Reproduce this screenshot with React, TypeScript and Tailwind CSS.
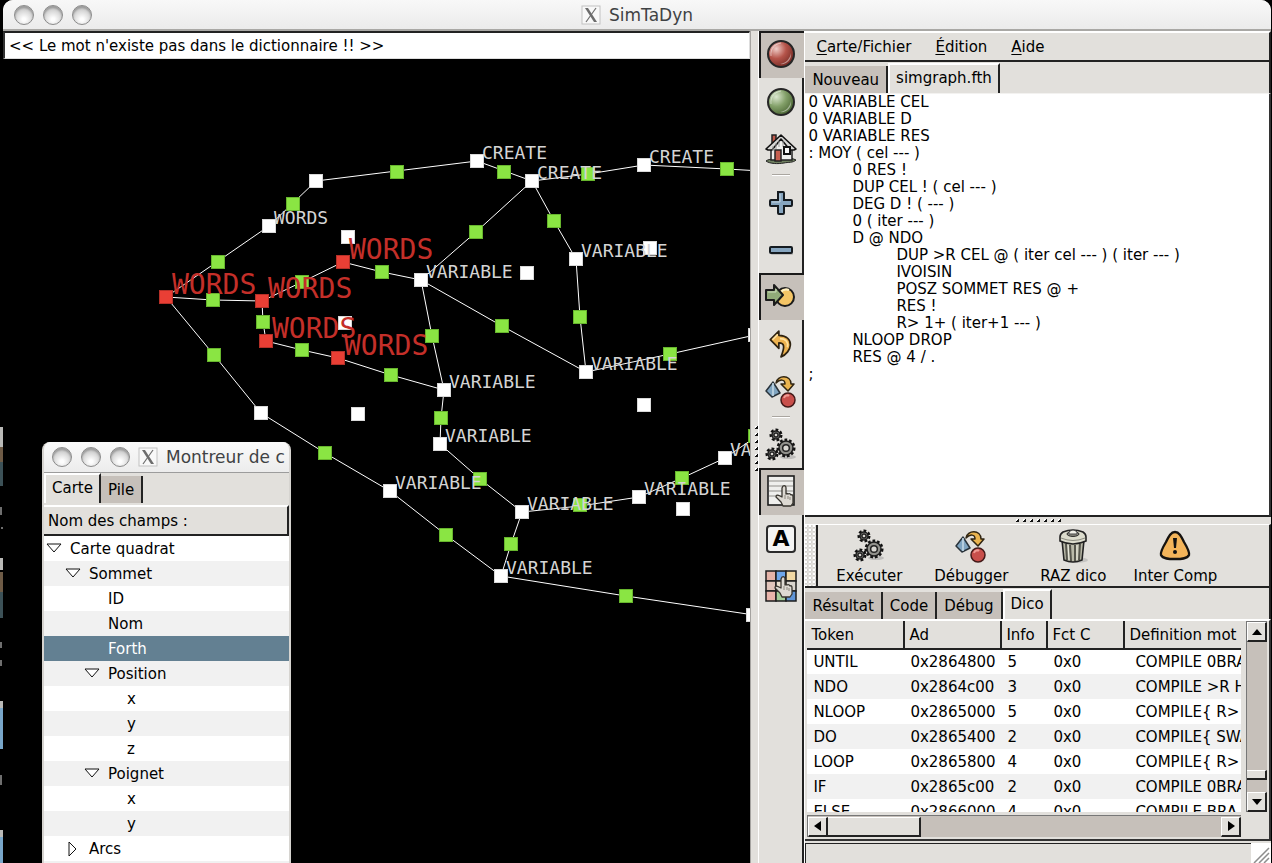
import { useState } from "react";
import type { ReactNode } from "react";

type Point = [number, number];

const EDGES: Point[][] = [
  [[166, 297], [269, 226], [316, 181], [477, 161], [532, 181], [588, 174], [644, 165], [727, 169], [811, 174]],
  [[532, 181], [476, 232], [421, 280]],
  [[532, 181], [554, 221], [576, 259], [580, 317], [586, 372]],
  [[421, 280], [502, 326], [586, 372], [670, 354], [755, 335]],
  [[166, 297], [213, 300], [262, 301], [302, 282], [343, 262], [382, 272], [421, 280]],
  [[262, 301], [263, 322], [266, 341], [302, 350], [338, 358], [391, 375], [444, 390]],
  [[421, 280], [432, 336], [444, 390], [441, 418], [440, 444], [480, 479], [522, 512], [511, 544], [501, 576]],
  [[522, 512], [580, 506], [639, 497], [682, 478], [725, 458], [757, 436]],
  [[166, 297], [214, 355], [261, 413], [325, 453], [390, 491], [446, 535], [501, 576], [626, 596], [754, 615]],
];

const WHITE: Point[] = [
  [316, 181], [269, 226], [477, 161], [532, 181], [644, 165], [576, 259], [421, 280], [586, 372],
  [444, 390], [440, 444], [522, 512], [390, 491], [501, 576], [261, 413], [639, 497], [725, 458],
  [755, 335], [753, 615], [348, 237], [527, 273], [345, 323], [650, 248], [644, 405], [358, 414], [683, 509],
];

const GREEN: Point[] = [
  [397, 172], [293, 204], [218, 262], [504, 172], [588, 174], [727, 169], [476, 232], [554, 221],
  [580, 317], [502, 326], [670, 354], [382, 272], [302, 282], [213, 300], [263, 322], [302, 350],
  [391, 375], [432, 336], [441, 418], [480, 479], [214, 355], [325, 453], [446, 535], [511, 544],
  [580, 505], [682, 478], [755, 436], [626, 596],
];

const RED: Point[] = [[166, 297], [262, 301], [343, 262], [266, 341], [338, 358]];

const LABELS: [number, number, string][] = [
  [269, 226, "WORDS"], [477, 161, "CREATE"], [532, 181, "CREATE"], [644, 165, "CREATE"],
  [576, 259, "VARIABLE"], [421, 280, "VARIABLE"], [586, 372, "VARIABLE"], [444, 390, "VARIABLE"],
  [440, 444, "VARIABLE"], [522, 512, "VARIABLE"], [390, 491, "VARIABLE"], [501, 576, "VARIABLE"],
  [639, 497, "VARIABLE"], [725, 458, "VARIABLE"],
];

const PROGRAM = `0 VARIABLE CEL
0 VARIABLE D
0 VARIABLE RES
: MOY ( cel --- )
\t0 RES !
\tDUP CEL ! ( cel --- )
\tDEG D ! ( --- )
\t0 ( iter --- )
\tD @ NDO
\t\tDUP >R CEL @ ( iter cel --- ) ( iter --- )
\t\tIVOISIN
\t\tPOSZ SOMMET RES @ +
\t\tRES !
\t\tR> 1+ ( iter+1 --- )
\tNLOOP DROP
\tRES @ 4 / .
;`;

const WORDS = [
  ["UNTIL", "0x2864800", "5", "0x0", "COMPILE 0BRANCH"],
  ["NDO", "0x2864c00", "3", "0x0", "COMPILE >R HERE"],
  ["NLOOP", "0x2865000", "5", "0x0", "COMPILE{ R>"],
  ["DO", "0x2865400", "2", "0x0", "COMPILE{ SWAP"],
  ["LOOP", "0x2865800", "4", "0x0", "COMPILE{ R>"],
  ["IF", "0x2865c00", "2", "0x0", "COMPILE 0BRANCH"],
  ["ELSE", "0x2866000", "4", "0x0", "COMPILE BRA"],
];

/* ---------- icons ---------- */

function Ball({ id, light, mid, dark }: { id: string; light: string; mid: string; dark: string }) {
  return (
    <svg width="30" height="30" viewBox="0 0 30 30" aria-hidden="true">
      <defs>
        <radialGradient id={id} cx="0.32" cy="0.3" r="0.75">
          <stop offset="0" stopColor={light} />
          <stop offset="0.5" stopColor={mid} />
          <stop offset="1" stopColor={dark} />
        </radialGradient>
      </defs>
      <circle cx="15" cy="15" r="13" fill={`url(#${id})`} stroke="#262626" strokeWidth="2" />
      <path d="M25 14c-1 6-5 10-11 11 6 1 12-4 11-11z" fill="#fff" opacity="0.45" />
      <path d="M5 17C4 9 9 5 15 4" fill="none" stroke="#fff" strokeWidth="1" opacity="0.5" />
    </svg>
  );
}

function House() {
  return (
    <svg width="32" height="32" viewBox="0 0 32 32" aria-hidden="true">
      <path d="M1 28c4-3 9-1 13-2 5-1 11-2 17 1-3 3-8 2-12 3-6 1-14 1-18-2z" fill="#6f8060" stroke="#222" />
      <path d="M7 2h4v9H7z" fill="#c0594a" stroke="#222" strokeWidth="1.5" />
      <path d="M6 15L16 4l11 11v12H6z" fill="#efefed" stroke="#222" strokeWidth="1.5" />
      <path d="M16 2L1 16l2 1h4L16 6l9 11h4l2-1z" fill="#d9d9d7" stroke="#111" strokeWidth="1.6" strokeLinejoin="round" />
      <path d="M8 13v5M11 10v6M14 8v6M18 8v6" stroke="#999" strokeWidth="1" />
      <path d="M10 17h6v11h-6z" fill="#c65f50" stroke="#222" strokeWidth="1.5" />
      <path d="M19 14h6v7h-6z" fill="#f8f8f8" stroke="#111" strokeWidth="2" />
    </svg>
  );
}

function Plus() {
  return (
    <svg width="26" height="26" viewBox="0 0 26 26" aria-hidden="true">
      <path d="M11 3h5v8h8v5h-8v8h-5v-8H3v-5h8z" fill="#888" opacity="0.4" />
      <path d="M10 2h5q1 0 1 1v7h7q1 0 1 1v4q0 1-1 1h-7v7q0 1-1 1h-4q-1 0-1-1v-7H3q-1 0-1-1v-4q0-1 1-1h7z" fill="#86a5bf" stroke="#151b20" strokeWidth="2" />
      <path d="M12 4v8H4" fill="none" stroke="#c5d6e2" strokeWidth="1" />
    </svg>
  );
}

function Minus() {
  return (
    <svg width="26" height="26" viewBox="0 0 26 26" aria-hidden="true">
      <rect x="3" y="12" width="22" height="6" rx="1" fill="#888" opacity="0.4" />
      <rect x="2" y="10" width="22" height="6" rx="1" fill="#86a5bf" stroke="#151b20" strokeWidth="2" />
    </svg>
  );
}

function Goto() {
  return (
    <svg width="32" height="26" viewBox="0 0 32 26" aria-hidden="true">
      <circle cx="20" cy="14" r="9" fill="#f4c566" stroke="#1b1b1b" strokeWidth="2" />
      <path d="M16 9a7 7 0 0 1 8-2" stroke="#fff0c0" strokeWidth="2" fill="none" />
      <path d="M1 7h8V2l9 10-9 10v-5H1z" fill="#91ab79" stroke="#1b1b1b" strokeWidth="2" strokeLinejoin="round" />
      <path d="M3 9h8V6" stroke="#cdddbd" strokeWidth="1" fill="none" />
    </svg>
  );
}

function Undo() {
  return (
    <svg width="28" height="30" viewBox="0 0 26 28" aria-hidden="true">
      <path d="M11 2L3 10l8 8v-5c5 0 6 3 2 13 10-4 14-19-2-20z" fill="#eeb350" stroke="#2e2210" strokeWidth="1.6" strokeLinejoin="round" />
      <path d="M10 5l-5 5M12 9c6 0 8 4 7 8" stroke="#ffe2a0" strokeWidth="1.5" fill="none" />
    </svg>
  );
}

function Debug() {
  return (
    <svg width="34" height="34" viewBox="0 0 34 34" aria-hidden="true">
      <path d="M9 8l7 11-8 4-6-6z" fill="#7fa4c0" stroke="#29333b" strokeWidth="1.5" strokeLinejoin="round" />
      <path d="M9 9v13" stroke="#c6dbe8" strokeWidth="1.5" />
      <path d="M12 9c1-8 15-9 15 1h3l-6 7-7-7h4c0-5-5-5-9-1z" fill="#eab44f" stroke="#302512" strokeWidth="1.5" strokeLinejoin="round" />
      <circle cx="24" cy="26" r="7" fill="#c84f4b" stroke="#431918" strokeWidth="1.5" />
      <path d="M20 24c1-3 4-3 5-2" stroke="#ef9b93" strokeWidth="2" fill="none" />
    </svg>
  );
}

function Cog({ x, y, r, w }: { x: number; y: number; r: number; w: number }) {
  return (
    <g transform={`translate(${x} ${y})`}>
      <circle r={r} fill="none" stroke="#111" strokeWidth={w + 2} strokeDasharray="2.6 1.9" />
      <circle r={r - 1} fill="#91918c" stroke="#1c1c1c" strokeWidth="1.5" />
      <circle r={r / 2.4} fill="#d8d6d1" stroke="#222" strokeWidth="1.5" />
    </g>
  );
}

function Cogs() {
  return (
    <svg width="34" height="34" viewBox="0 0 34 34" aria-hidden="true">
      <ellipse cx="24" cy="29" rx="8" ry="2" fill="#999" opacity="0.5" />
      <Cog x={12} y={7} r={5} w={1} />
      <Cog x={8} y={26} r={5} w={1} />
      <Cog x={22} y={20} r={8} w={1} />
    </svg>
  );
}

function HandShape() {
  return (
    <path
      d="M9 1q3-1 3 2v6q1-1 2 0 2-1 3 1 2-1 2 2v6l-2 3H9l-2-4-5-5q0-3 4-1l2 1V3z"
      fill="#ddd9d2"
      stroke="#38352f"
      strokeWidth="1.3"
      strokeLinejoin="round"
    />
  );
}

function ListHand() {
  return (
    <svg width="30" height="32" viewBox="0 0 30 32" aria-hidden="true">
      <rect x="2" y="1" width="26" height="29" fill="#efefed" stroke="#1c1c1c" strokeWidth="1.6" />
      <path d="M3 6h24M3 11h24M3 16h24M3 21h24" stroke="#b0afab" strokeWidth="1.5" />
      <g transform="translate(8 10)">
        <HandShape />
        <path d="M11 10v4M14 11v3M16 12v3" stroke="#8c877e" />
      </g>
    </svg>
  );
}

function Letter() {
  return (
    <span className="flex h-7 w-[30px] items-center justify-center rounded-sm border-2 border-[#2b2b2b] bg-[#f4f4f3] text-[22px] leading-none font-black text-black" aria-hidden="true">
      A
    </span>
  );
}

function GridHand() {
  const cells = ["#e4b3a8", "#6ea6e8", "#f1d8a3", "#e1c5bb", "#eadfce", "#d9d5ce", "#e9b5ab", "#a5cf9b", "#5f94d6"];
  return (
    <svg width="32" height="32" viewBox="0 0 32 32" aria-hidden="true">
      {cells.map((c, i) => (
        <rect key={i} x={1 + (i % 3) * 10} y={1 + Math.floor(i / 3) * 10} width="10" height="10" fill={c} stroke="#1c1c1c" strokeWidth="1.5" />
      ))}
      <g transform="translate(8 6)">
        <HandShape />
        <path d="M11 10v4M14 11v3M16 12v3" stroke="#8c877e" />
      </g>
    </svg>
  );
}

function Bin() {
  return (
    <svg width="34" height="36" viewBox="0 0 34 36" aria-hidden="true">
      <ellipse cx="20" cy="32" rx="12" ry="3" fill="#999" opacity="0.4" />
      <path d="M6 12l2 20q9 4 18 0l2-20z" fill="#b9b9a8" stroke="#222" strokeWidth="1.6" />
      <path d="M10 16l1 16M14 17l1 16M19 17v16M24 16l-1 16" stroke="#55554c" strokeWidth="2" />
      <path d="M12 16l1 16M21 17v15" stroke="#eeeee2" strokeWidth="1" />
      <path d="M4 9q0-3 3-5 10-4 20 0 3 2 3 5v4q-13 6-26 0z" fill="#dcdccd" stroke="#222" strokeWidth="1.6" />
      <path d="M5 10q12 5 24 0" stroke="#8b8b80" fill="none" />
      <ellipse cx="17" cy="6" rx="6" ry="2.4" fill="#8d8d83" stroke="#222" strokeWidth="1" />
      <path d="M13 4q4-4 8 0v2h-8z" fill="#f2f2ea" stroke="#444" strokeWidth="1" />
    </svg>
  );
}

function Warning() {
  return (
    <svg width="34" height="32" viewBox="0 0 34 32" aria-hidden="true">
      <path d="M17 2c4 0 6 4 9 10 3 5 6 10 5 13-2 4-8 4-14 4S5 29 3 25c-1-3 2-8 5-13 3-6 5-10 9-10z" fill="#f3b45a" stroke="#161310" strokeWidth="2.4" />
      <path d="M15 8h4l-1 10h-2z" fill="#111" />
      <circle cx="17" cy="22" r="2" fill="#111" />
    </svg>
  );
}

function XMark() {
  return (
    <svg className="shrink-0" width="20" height="20" viewBox="0 0 20 20" aria-hidden="true">
      <rect x="1" y="1" width="18" height="18" fill="#f8f8f8" stroke="#c2c2c2" />
      <path d="M4 3h3l9 14h-3z" fill="#6c6c6c" />
      <path d="M15 3L5 17" stroke="#6c6c6c" strokeWidth="1.2" />
    </svg>
  );
}

/* ---------- shared parts ---------- */

const LIGHTS = ["Fermer", "Réduire", "Agrandir"];

function TrafficLights() {
  return (
    <div className="flex gap-[9px]">
      {LIGHTS.map((label) => (
        <button
          key={label}
          aria-label={label}
          className="size-5 shrink-0 rounded-full border border-[#8a8a8a] bg-[radial-gradient(circle_at_50%_75%,#fdfdfd_10%,#d2d2d2_60%,#a3a3a3_100%)] shadow-[inset_0_2px_2px_#9a9a9a]"
        />
      ))}
    </div>
  );
}

function Tab({ active, onClick, children }: { active: boolean; onClick: () => void; children: ReactNode }) {
  return (
    <button
      role="tab"
      aria-selected={active}
      onClick={onClick}
      className={
        active
          ? "h-[30px] border-t-2 border-r-2 border-l-2 border-t-white border-r-[#222] border-l-white bg-[#e2e0dc] px-[6px] pb-[2px] whitespace-nowrap"
          : "h-[27px] border-r-2 border-r-[#222] bg-[#c6c0ba] px-[7px] whitespace-nowrap"
      }
    >
      {children}
    </button>
  );
}

function ToolButton({ label, pressed, onClick, children }: { label: string; pressed: boolean; onClick: () => void; children: ReactNode }) {
  return (
    <button
      aria-label={label}
      aria-pressed={pressed}
      onClick={onClick}
      className={
        pressed
          ? "flex h-[47px] w-full shrink-0 items-center justify-center border-t-2 border-l-2 border-[#1a1a1a] bg-[#c6c0ba] pr-1 pb-1"
          : "flex h-[47px] w-full shrink-0 items-center justify-center border-r-2 border-[#222]"
      }
    >
      {children}
    </button>
  );
}

function ToolSeparator() {
  return (
    <div className="flex h-[7px] w-full shrink-0 justify-center border-r-2 border-[#222] pt-[2px]">
      <div className="h-[2px] w-[18px] border-t border-b border-t-[#aaa6a0] border-b-white" />
    </div>
  );
}

function ScrollButton({ label, d }: { label: string; d: string }) {
  return (
    <button
      aria-label={label}
      className="flex size-5 shrink-0 items-center justify-center border-t border-r-2 border-b-2 border-l border-t-white border-r-[#222] border-b-[#222] border-l-white bg-[#e2e0dc]"
    >
      <svg width="10" height="10" viewBox="0 0 10 10" aria-hidden="true">
        <path d={d} fill="#000" />
      </svg>
    </button>
  );
}

/* ---------- graph ---------- */

function Squares({ points, fill, stroke }: { points: Point[]; fill: string; stroke: string }) {
  return (
    <>
      {points.map(([x, y]) => (
        <rect key={`${x}-${y}`} x={x - 6.5} y={y - 6.5} width="13" height="13" fill={fill} stroke={stroke} />
      ))}
    </>
  );
}

function Graph() {
  return (
    <div className="min-h-0 flex-1 overflow-hidden bg-black">
      <svg className="block h-full w-full font-['DejaVu_Sans_Mono',monospace]" role="img" aria-label="Graphe">
        <g transform="translate(-3 -59)">
          {EDGES.map((line, i) => (
            <polyline key={i} points={line.map((p) => p.join(",")).join(" ")} fill="none" stroke="#fff" strokeWidth="1" />
          ))}
          <Squares points={WHITE} fill="#fff" stroke="#d8d8d8" />
          <Squares points={GREEN} fill="#8ae543" stroke="#67b52d" />
          <Squares points={RED} fill="#e93f35" stroke="#b53028" />
          {LABELS.map(([x, y, t]) => (
            <text key={`${x}-${y}`} x={x + 5} y={y - 2} fontSize="18" fill="#d4d4d4">
              {t}
            </text>
          ))}
          {RED.map(([x, y]) => (
            <text key={`${x}-${y}`} x={x + 6} y={y - 3} fontSize="28" fill="#c42f29">
              WORDS
            </text>
          ))}
        </g>
      </svg>
    </div>
  );
}

/* ---------- floating field viewer ---------- */

type TreeRow = { label: string; exp: string; pad: string; selected?: boolean };

const OPEN = "M1 2h14l-7 8z";
const CLOSED = "M4 0v14l7-7z";

const TREE: TreeRow[] = [
  { label: "Carte quadrat", exp: OPEN, pad: "pl-[2px]" },
  { label: "Sommet", exp: OPEN, pad: "pl-[21px]" },
  { label: "ID", exp: "", pad: "pl-[40px]" },
  { label: "Nom", exp: "", pad: "pl-[40px]" },
  { label: "Forth", exp: "", pad: "pl-[40px]", selected: true },
  { label: "Position", exp: OPEN, pad: "pl-[40px]" },
  { label: "x", exp: "", pad: "pl-[59px]" },
  { label: "y", exp: "", pad: "pl-[59px]" },
  { label: "z", exp: "", pad: "pl-[59px]" },
  { label: "Poignet", exp: OPEN, pad: "pl-[40px]" },
  { label: "x", exp: "", pad: "pl-[59px]" },
  { label: "y", exp: "", pad: "pl-[59px]" },
  { label: "Arcs", exp: CLOSED, pad: "pl-[21px]" },
];

function FieldViewer() {
  const [tab, setTab] = useState("Carte");
  return (
    <section className="absolute top-[442px] bottom-0 left-[42px] flex w-[249px] flex-col overflow-hidden rounded-t-lg border-x-2 border-[#d6d4d0] bg-[#e2e0dc]">
      <header className="flex h-[31px] shrink-0 items-center gap-2 overflow-hidden border-b border-[#9c9c9c] bg-gradient-to-b from-[#fafafa] to-[#ececec] pr-1 pl-2">
        <TrafficLights />
        <XMark />
        <h2 className="overflow-hidden text-[17px] whitespace-nowrap text-[#3f4244]">Montreur de c</h2>
      </header>
      <div role="tablist" className="flex h-[30px] shrink-0 items-end">
        {["Carte", "Pile"].map((t) => (
          <Tab key={t} active={tab === t} onClick={() => setTab(t)}>
            {t}
          </Tab>
        ))}
      </div>
      <div className="mt-[2px] flex h-[31px] shrink-0 items-center border-t-2 border-r-2 border-b-2 border-t-white border-r-[#222] border-b-[#222] pl-1">
        Nom des champs :
      </div>
      <ul className="min-h-0 flex-1 overflow-hidden bg-[#f1f1f1]">
        {TREE.map((row, i) => (
          <li key={i}>
            <button
              className={`flex h-[25px] w-full items-center gap-2 text-left ${row.pad} ${
                row.selected ? "bg-[#638092] text-white" : i % 2 ? "bg-[#f1f1f1]" : "bg-white"
              }`}
            >
              <svg width="16" height="14" viewBox="0 0 16 14" aria-hidden="true">
                {row.exp && <path d={row.exp} fill="#fff" stroke="#111" />}
              </svg>
              {row.label}
            </button>
          </li>
        ))}
      </ul>
    </section>
  );
}

/* ---------- page ---------- */

const MENUS = ["Carte/Fichier", "Édition", "Aide"];

export default function App() {
  const [fileTab, setFileTab] = useState("simgraph.fth");
  const [outTab, setOutTab] = useState("Dico");
  const [tools, setTools] = useState(["record", "goto", "list"]);
  const toggle = (id: string) => setTools((t) => (t.includes(id) ? t.filter((v) => v !== id) : [...t, id]));
  const tool = (id: string, label: string, icon: ReactNode) => (
    <ToolButton label={label} pressed={tools.includes(id)} onClick={() => toggle(id)}>
      {icon}
    </ToolButton>
  );

  return (
    <div className="relative flex h-screen overflow-hidden bg-black font-['DejaVu_Sans',sans-serif] text-[15px] leading-5 text-black">
      <div className="w-[3px] shrink-0 overflow-hidden">
        <svg width="3" height="863" aria-hidden="true">
          <path d="M0 427h3v20H0zM0 558h3v12H0zM0 701h3v7H0zM0 830h3v7H0z" fill="#b9b9b7" />
          <path d="M0 447h3v15H0zM0 572h3v20H0z" fill="#6e5b46" />
          <path d="M0 462h3v24H0zM0 592h3v26H0z" fill="#3c5157" />
          <path d="M0 708h3v41H0zM0 837h3v26H0z" fill="#78a6c9" />
          <path d="M1 507v8M1 528h2M1 642v6M1 660v6M1 775v10" stroke="#ddd" />
        </svg>
      </div>

      <main className="flex min-w-0 flex-1 flex-col overflow-hidden rounded-t-[10px] bg-[#e2e0dc]">
        <header className="grid h-[31px] shrink-0 grid-cols-[1fr_auto_1fr] items-center border-b-2 border-[#a9a8a5] bg-gradient-to-b from-[#f8f8f8] to-[#ebebeb] px-[11px]">
          <TrafficLights />
          <div className="flex items-center gap-2">
            <XMark />
            <h1 className="text-[17px] text-[#3f4244]">SimTaDyn</h1>
          </div>
        </header>

        <div className="flex min-h-0 flex-1">
          <div className="flex min-w-0 flex-[748] flex-col">
            <input
              aria-label="Message"
              readOnly
              value="<< Le mot n'existe pas dans le dictionnaire !! >>"
              className="h-7 w-full shrink-0 border-t-2 border-r border-b border-l-2 border-t-[#222] border-r-[#ddd] border-b-[#ddd] border-l-[#333] bg-white px-1 outline-none"
            />
            <Graph />
          </div>

          <div className="flex w-2 shrink-0 items-center justify-end border-l border-[#a5a3a0] pt-[3px]">
            <div className="flex flex-col gap-[4px]">
              {[0, 1, 2, 3, 4, 5, 6].map((i) => (
                <span key={i} className="h-[3px] w-[3px] bg-[linear-gradient(135deg,#fff_35%,#111_50%)]" />
              ))}
            </div>
          </div>

          <nav aria-label="Outils" className="flex w-[46px] shrink-0 flex-col border-l border-white">
            {tool("record", "Arrêt", <Ball id="ball-red" light="#f0cdc8" mid="#b5544a" dark="#762c26" />)}
            {tool("run", "Marche", <Ball id="ball-green" light="#dbe7cf" mid="#83a069" dark="#4b6634" />)}
            {tool("home", "Accueil", <House />)}
            <ToolSeparator />
            {tool("plus", "Zoom avant", <Plus />)}
            {tool("minus", "Zoom arrière", <Minus />)}
            {tool("goto", "Aller", <Goto />)}
            {tool("undo", "Annuler", <Undo />)}
            {tool("debug", "Débugger", <Debug />)}
            <ToolSeparator />
            {tool("cogs", "Exécuter", <Cogs />)}
            {tool("list", "Sélection", <ListHand />)}
            {tool("letter", "Texte", <Letter />)}
            {tool("grid", "Grille", <GridHand />)}
            <div className="flex-1 border-r-2 border-[#222]" />
          </nav>

          <div className="flex min-w-0 flex-[466] flex-col border-l border-white">
            <nav aria-label="Menu" className="flex h-[31px] shrink-0 items-center gap-6 border-t-2 border-r-2 border-b-2 border-t-white border-r-[#222] border-b-[#222] pl-[11px]">
              {MENUS.map((m) => (
                <button key={m}>
                  <span className="underline underline-offset-2">{m[0]}</span>
                  {m.slice(1)}
                </button>
              ))}
            </nav>
            <div role="tablist" className="flex h-[31px] shrink-0 items-end border-r-2 border-r-[#222]">
              {["Nouveau", "simgraph.fth"].map((t) => (
                <Tab key={t} active={fileTab === t} onClick={() => setFileTab(t)}>
                  {t}
                </Tab>
              ))}
            </div>
            <textarea
              aria-label="Programme"
              spellCheck={false}
              defaultValue={PROGRAM}
              className="block min-h-0 w-full flex-1 resize-none overflow-hidden border-t border-r-2 border-b-2 border-t-[#f3f2f0] border-r-[#333] border-b-[#222] bg-white pl-[3px] leading-[17px] [tab-size:44px] outline-none"
            />

            <div className="flex h-[7px] shrink-0 items-center justify-center gap-[4px]">
              {[0, 1, 2, 3, 4, 5, 6].map((i) => (
                <span key={i} className="h-[3px] w-[3px] bg-[linear-gradient(135deg,#fff_35%,#111_50%)]" />
              ))}
            </div>

            <div className="flex h-[64px] shrink-0 border-t border-r-2 border-b-2 border-t-white border-r-[#222] border-b-[#222]">
              <div className="w-[13px] shrink-0 border-r-2 border-[#222] bg-[radial-gradient(circle_at_1px_1px,#fff_1px,#b5b2ad_2px,#e2e0dc_2px)] bg-[length:4px_4px]" />
              <div className="grid grid-cols-[102px_102px_102px_102px]">
                {[
                  ["Exécuter", <Cogs key="i" />],
                  ["Débugger", <Debug key="i" />],
                  ["RAZ dico", <Bin key="i" />],
                  ["Inter Comp", <Warning key="i" />],
                ].map(([label, icon]) => (
                  <button key={label as string} className="flex flex-col items-center whitespace-nowrap">
                    <span className="flex h-[42px] items-center">{icon}</span>
                    <span className="leading-[18px]">{label}</span>
                  </button>
                ))}
              </div>
            </div>

            <div role="tablist" className="flex h-[31px] shrink-0 items-end border-r-2 border-r-[#222]">
              {["Résultat", "Code", "Débug", "Dico"].map((t) => (
                <Tab key={t} active={outTab === t} onClick={() => setOutTab(t)}>
                  {t}
                </Tab>
              ))}
            </div>

            <div className="flex h-[222px] shrink-0 gap-[5px] border-t-2 border-r-2 border-b-2 border-t-white border-r-[#333] border-b-[#333] pr-[2px] pb-[2px] pl-[2px]">
              <div className="flex min-w-0 flex-1 flex-col gap-[3px]">
                <div className="h-[193px] overflow-hidden bg-white">
                  <table className="w-full table-fixed border-collapse text-left">
                    <colgroup>
                      <col className="w-[97px]" />
                      <col className="w-[97px]" />
                      <col className="w-[46px]" />
                      <col className="w-[77px]" />
                      <col />
                    </colgroup>
                    <thead>
                      <tr className="h-[28px] border-b-2 border-[#222] bg-[#e2e0dc]">
                        {["Token", "Ad", "Info", "Fct C", "Definition mot"].map((h) => (
                          <th key={h} scope="col" className="overflow-hidden border-r-2 border-[#222] px-1 font-normal whitespace-nowrap last:border-r-0">
                            {h}
                          </th>
                        ))}
                      </tr>
                    </thead>
                    <tbody>
                      {WORDS.map((row) => (
                        <tr key={row[0]} className="h-[25px] even:bg-[#f1f1f1]">
                          <td className="overflow-hidden pl-[6px] whitespace-nowrap">{row[0]}</td>
                          <td className="overflow-hidden pl-[6px] whitespace-nowrap">{row[1]}</td>
                          <td className="overflow-hidden pl-[6px] whitespace-nowrap">{row[2]}</td>
                          <td className="overflow-hidden pl-[6px] whitespace-nowrap">{row[3]}</td>
                          <td className="overflow-hidden pl-[11px] whitespace-nowrap">{row[4]}</td>
                        </tr>
                      ))}
                    </tbody>
                  </table>
                </div>
                <div className="flex h-[22px] items-center border-t border-l border-[#777] bg-[#c6c0ba]">
                  <ScrollButton label="Gauche" d="M8 0v10L1 5z" />
                  <div className="h-5 w-[93px] border-t border-r-2 border-b-2 border-t-white border-r-[#222] border-b-[#222] bg-[#e2e0dc]" />
                  <div className="flex-1" />
                  <ScrollButton label="Droite" d="M2 0v10l7-5z" />
                </div>
              </div>
              <div className="flex h-[191px] w-[21px] shrink-0 flex-col border-t border-l border-[#777] bg-[#c6c0ba]">
                <ScrollButton label="Haut" d="M0 8h10L5 2z" />
                <div className="flex-1" />
                <div className="mb-[12px] h-[10px] w-5 border-t border-r-2 border-b-2 border-t-white border-r-[#222] border-b-[#222] bg-[#e2e0dc]" />
                <ScrollButton label="Bas" d="M0 2h10L5 8z" />
              </div>
            </div>

            <footer className="flex h-[22px] shrink-0 items-end pt-[2px]">
              <div className="h-full flex-1 border-t border-l border-[#222]" />
              <svg className="bg-white" width="20" height="20" viewBox="0 0 20 20" aria-hidden="true">
                <path d="M3 20L18 5M8 20L18 10M13 20l5-5" stroke="#8e8e8e" strokeWidth="1.5" />
              </svg>
            </footer>
          </div>
        </div>
      </main>
      <div className="w-px shrink-0 bg-black" />

      <FieldViewer />
    </div>
  );
}
